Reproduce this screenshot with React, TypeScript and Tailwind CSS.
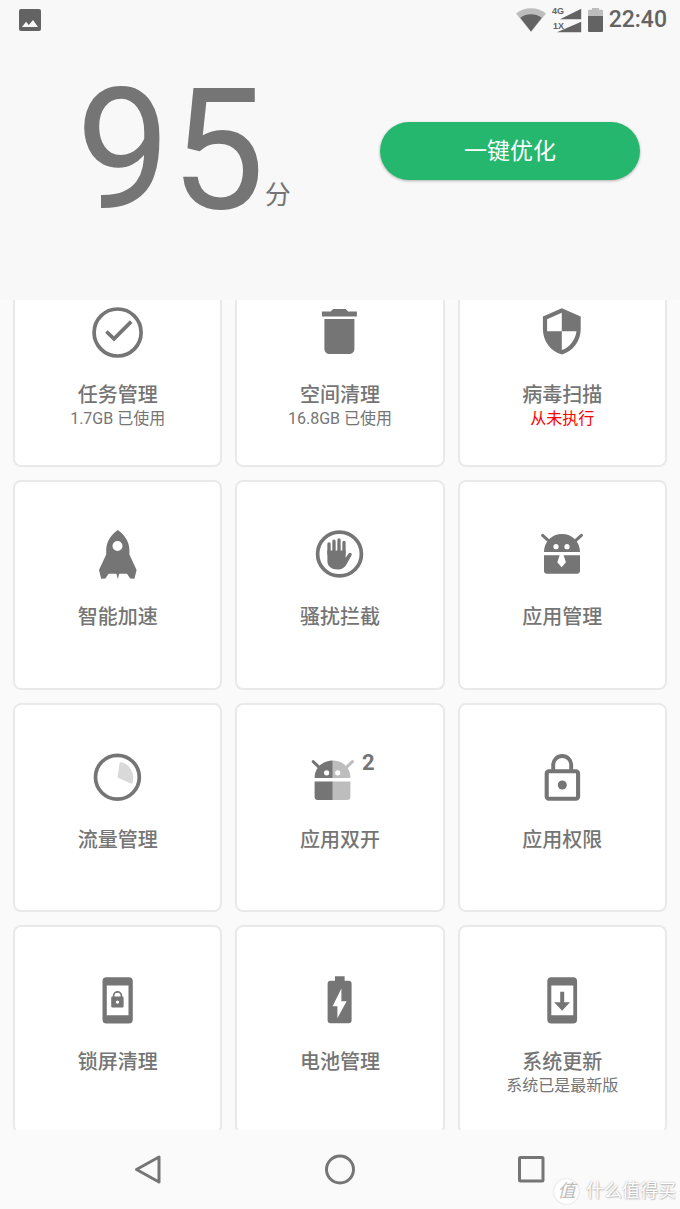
import type { ReactNode } from "react";

type Tile = {
  title: string;
  note?: string;
  alert?: boolean;
  icon: ReactNode;
  badge?: string;
};

function Icon({ children }: { children: ReactNode }) {
  return (
    <svg
      viewBox="0 0 52 52"
      className="size-[52px] overflow-visible"
      fill="currentColor"
      aria-hidden="true"
    >
      {children}
    </svg>
  );
}

const tiles: Tile[] = [
  {
    title: "任务管理",
    note: "1.7GB 已使用",
    icon: (
      <Icon>
        <circle cx="25.6" cy="26.5" r="23.5" fill="none" stroke="currentColor" strokeWidth="3.7" />
        <path d="M14.4 25.5l7.6 7.4L39.2 15.6" fill="none" stroke="currentColor" strokeWidth="3.7" />
      </Icon>
    ),
  },
  {
    title: "空间清理",
    note: "16.8GB 已使用",
    icon: (
      <Icon>
        <path
          transform="translate(-4.6 -4.6) scale(2.5)"
          d="M6 19c0 1.1.9 2 2 2h8c1.1 0 2-.9 2-2V7H6v12zM19 4h-3.5l-1-1h-5l-1 1H5v2h14V4z"
        />
      </Icon>
    ),
  },
  {
    title: "病毒扫描",
    note: "从未执行",
    alert: true,
    icon: (
      <Icon>
        <path
          transform="translate(.6 .1) scale(2.1)"
          d="M12 1L3 5v6c0 5.55 3.84 10.74 9 12 5.16-1.26 9-6.45 9-12V5l-9-4zm0 10.99h7c-.53 4.12-3.28 7.79-7 8.94V12H5V6.3l7-3.11v8.8z"
        />
      </Icon>
    ),
  },
  {
    title: "智能加速",
    icon: (
      <Icon>
        <path
          fillRule="evenodd"
          d="M25.800 2C19.500 6.500 14.200 13.500 14.200 22v4.500L7 42l2.200 8.800 4.200-.4 3.200-4.700h7.800L25.800 51l1.400-5.300H35l3.200 4.700 4.200.4L44.600 42l-7.200-15.500V22C37.400 13.500 32.100 6.500 25.800 2zM25.500 13a5 5 0 1 1 0 10 5 5 0 0 1 0-10z"
        />
      </Icon>
    ),
  },
  {
    title: "骚扰拦截",
    icon: (
      <Icon>
        <circle cx="25.5" cy="26" r="21.900" fill="none" stroke="currentColor" strokeWidth="3.7" />
        <path
          d="M15 15.8V26M20 13.2V26M25 12V26M30 14.3V26"
          fill="none"
          stroke="currentColor"
          strokeWidth="3.3"
          strokeLinecap="round"
        />
        <path d="M13.4 22.500h18.200v7.200l3-4.300c1.600-1.600 3.800-.2 3 1.900l-4.600 8.200c-2 4-5 6-9.200 6-6.200 0-10.400-3-10.400-8.500z" />
      </Icon>
    ),
  },
  {
    title: "应用管理",
    icon: (
      <Icon>
        <path
          d="M6.6 7.300l5.800 5.400M45.400 7.300l-5.800 5.400"
          fill="none"
          stroke="currentColor"
          strokeWidth="3"
          strokeLinecap="round"
        />
        <path
          fillRule="evenodd"
          d="M8 24C8 13.5 15.800 6 26 6s18 7.500 18 18zM20 16.100a2.600 2.600 0 1 0 0 5.200 2.600 2.600 0 0 0 0-5.200zM31 16.100a2.600 2.600 0 1 0 0 5.200 2.600 2.600 0 0 0 0-5.200z"
        />
        <path d="M8 27.300h15.600l-2.300 7 4.400 5 4.200-5-2.300-7H44v15.400a3 3 0 0 1-3 3H11a3 3 0 0 1-3-3z" />
      </Icon>
    ),
  },
  {
    title: "流量管理",
    icon: (
      <Icon>
        <circle cx="25.4" cy="26.2" r="21.900" fill="none" stroke="currentColor" strokeWidth="3.7" />
        <path className="fill-[#d9d9d9]" d="M25.500 26.500l2.300-15.600A16 16 0 0 1 40 33.100z" />
      </Icon>
    ),
  },
  {
    title: "应用双开",
    badge: "2",
    icon: (
      <Icon>
        <path d="M-.8 10.600l5.500 5.200" fill="none" stroke="currentColor" strokeWidth="3" strokeLinecap="round" />
        <path
          fillRule="evenodd"
          d="M.6 27C.6 16.800 8.500 9.500 18.800 9.500V27zM12.600 19.200a2.600 2.600 0 1 0 0 5.200 2.600 2.600 0 0 0 0-5.200z"
        />
        <path d="M.6 30.500h18.200V49H3.600a3 3 0 0 1-3-3z" />
        <g className="text-[#bdbdbd]">
          <path d="M38.400 10.600l-5.500 5.200" fill="none" stroke="currentColor" strokeWidth="3" strokeLinecap="round" />
          <path
            fill="currentColor"
            fillRule="evenodd"
            d="M36.400 27C36.400 16.800 29 9.500 18.800 9.500V27zM23.700 19.200a2.600 2.600 0 1 0 0 5.200 2.600 2.600 0 0 0 0-5.200z"
          />
          <path fill="currentColor" d="M18.800 30.500h17.600V46a3 3 0 0 1-3 3H18.800z" />
        </g>
      </Icon>
    ),
  },
  {
    title: "应用权限",
    icon: (
      <Icon>
        <rect x="10.700" y="20.200" width="31.400" height="27.500" rx="2.200" fill="none" stroke="currentColor" strokeWidth="4.100" />
        <path d="M17.200 20v-6a9 9 0 0 1 18 0v6" fill="none" stroke="currentColor" strokeWidth="3.900" />
        <circle cx="26.300" cy="34" r="4.500" />
      </Icon>
    ),
  },
  {
    title: "锁屏清理",
    icon: (
      <Icon>
        <path
          fillRule="evenodd"
          d="M14.500 4.200h22.300a4 4 0 0 1 4 4v38.300a4 4 0 0 1-4 4H14.500a4 4 0 0 1-4-4V8.200a4 4 0 0 1 4-4zM14.800 12.500v29.700h21.700V12.500z"
        />
        <path
          fillRule="evenodd"
          d="M20.400 23.500h10a1.200 1.200 0 0 1 1.200 1.200v8.600a1.200 1.200 0 0 1-1.200 1.200h-10a1.200 1.200 0 0 1-1.200-1.200v-8.600a1.200 1.200 0 0 1 1.200-1.200zM25.500 27.400a1.700 1.700 0 1 0 0 3.400 1.700 1.700 0 0 0 0-3.400z"
        />
        <path d="M21.600 24v-1.200a3.900 3.900 0 0 1 7.800 0V24" fill="none" stroke="currentColor" strokeWidth="1.700" />
      </Icon>
    ),
  },
  {
    title: "电池管理",
    icon: (
      <Icon>
        <path
          fillRule="evenodd"
          d="M21 3.200h9.600v4.600h4a3 3 0 0 1 3 3v36.400a3 3 0 0 1-3 3h-18a3 3 0 0 1-3-3V10.800a3 3 0 0 1 3-3H21zM27.400 15.500l-8.800 17.700h4.800v12l9.200-17h-5.200z"
        />
      </Icon>
    ),
  },
  {
    title: "系统更新",
    note: "系统已是最新版",
    icon: (
      <Icon>
        <path
          fillRule="evenodd"
          d="M15.300 4.200h21.800a4 4 0 0 1 4 4v38.300a4 4 0 0 1-4 4H15.300a4 4 0 0 1-4-4V8.200a4 4 0 0 1 4-4zM15.300 12.500v29.700h22V12.500z"
        />
        <path d="M24.200 18.800h4v10.400H34l-7.900 8.600-7.900-8.600h6z" />
      </Icon>
    ),
  },
];

function StatusBar() {
  return (
    <div className="flex h-10 items-center justify-between pl-[19px] pr-[13px] text-[#636363]">
      <svg viewBox="0 0 22 22" className="size-[22px]" fill="currentColor" aria-hidden="true">
        <path
          fillRule="evenodd"
          d="M2 0h18a2 2 0 0 1 2 2v18a2 2 0 0 1-2 2H2a2 2 0 0 1-2-2V2a2 2 0 0 1 2-2zM3 18h16l-5-7-4.200 5L7 12.700z"
        />
      </svg>
      <div className="flex items-center gap-[6px]">
        <svg viewBox="0 0 30 24" className="h-6 w-[30px]" aria-hidden="true">
          <path className="fill-[#bdbdbd]" d="M0 5.500C8.500-1.500 21.500-1.500 30 5.500L15 24z" />
          <path fill="currentColor" d="M4.300 9.800C10.500 5.200 19.500 5.200 25.700 9.800L15 23.500z" />
        </svg>
        <svg viewBox="0 0 30 26" className="h-[26px] w-[30px]" fill="currentColor" aria-hidden="true">
          <path d="M8 12.300L29.200 1.700v10.600zM5 25.300L29.200 14.700v10.600z" />
          <text x="0" y="7" className="font-['Liberation_Sans'] text-[9px] font-bold">4G</text>
          <text x="1" y="21.500" className="font-['Liberation_Sans'] text-[9px] font-bold">1X</text>
        </svg>
        <svg viewBox="0 0 15 24" className="h-6 w-[15px]" aria-hidden="true">
          <path className="fill-[#bdbdbd]" d="M4 0h7v1.800h3a1 1 0 0 1 1 1V9H0V2.800a1 1 0 0 1 1-1h3z" />
          <path fill="currentColor" d="M0 8h15v15a1 1 0 0 1-1 1H1a1 1 0 0 1-1-1z" />
        </svg>
        <time className="text-[23px] leading-6 font-medium">22:40</time>
      </div>
    </div>
  );
}

function FeatureTile({ tile }: { tile: Tile }) {
  return (
    <button
      type="button"
      className="flex aspect-square flex-col items-center justify-start rounded-lg border-2 border-[#e9e9e9] bg-white pt-[46px]"
    >
      <span className="relative">
        {tile.icon}
        {tile.badge && (
          <span className="absolute top-0 left-full -ml-1 text-[22px] leading-6 font-bold">{tile.badge}</span>
        )}
      </span>
      <span className="mt-[23px] text-xl leading-7 font-medium">{tile.title}</span>
      {tile.note && (
        <span className={tile.alert ? "text-base leading-5 text-[#ff0000]" : "text-base leading-5"}>
          {tile.note}
        </span>
      )}
    </button>
  );
}

export default function App() {
  return (
    <div className="relative flex h-screen flex-col overflow-hidden bg-[#fafafa] font-[Roboto,'Noto_Sans_CJK_SC',sans-serif] text-[#757575]">
      <header className="shrink-0 bg-[#f8f8f8]">
        <StatusBar />
        <div className="flex items-center justify-between pt-[27px] pr-10 pb-[65px] pl-[76px]">
          <p className="flex items-baseline">
            <span className="text-[168px] leading-none">95</span>
            <span className="relative bottom-1 text-[26px] leading-none">分</span>
          </p>
          <button
            type="button"
            className="h-[58px] w-[260px] rounded-full bg-[#25b76e] pt-[3px] text-[23px] text-white shadow-[0_1px_3px_rgba(0,0,0,0.3)]"
          >
            一键优化
          </button>
        </div>
      </header>

      <main className="min-h-0 flex-1 overflow-hidden">
        <div className="-mt-[42px] grid grid-cols-3 gap-[13px] px-[13px]">
          {tiles.map((tile) => (
            <FeatureTile key={tile.title} tile={tile} />
          ))}
        </div>
      </main>

      <nav className="grid h-[79px] shrink-0 grid-cols-3 place-items-center px-[52px]">
        <button type="button" aria-label="返回">
          <svg viewBox="0 0 32 32" className="size-8" fill="none" stroke="currentColor" strokeWidth="3" strokeLinejoin="round" aria-hidden="true">
            <path d="M4.500 15.500L27 3v25z" />
          </svg>
        </button>
        <button type="button" aria-label="主屏幕">
          <svg viewBox="0 0 32 32" className="size-8" fill="none" stroke="currentColor" strokeWidth="3" aria-hidden="true">
            <circle cx="16" cy="15.500" r="13.500" />
          </svg>
        </button>
        <button type="button" aria-label="最近任务">
          <svg viewBox="0 0 32 32" className="size-8" fill="none" stroke="currentColor" strokeWidth="3" aria-hidden="true">
            <rect x="3.500" y="3.500" width="23.500" height="23.500" rx="1" />
          </svg>
        </button>
      </nav>

      <div className="absolute right-1 bottom-1 flex items-center gap-[7px] text-white">
        <span className="flex size-[25px] items-center justify-center rounded-full bg-white text-lg leading-none text-[#bdbdbd] italic shadow-[0_0_2px_rgba(0,0,0,0.2)]">
          值
        </span>
        <span className="text-lg leading-7 [text-shadow:0_0_2px_rgba(0,0,0,0.35),1px_1px_1px_rgba(0,0,0,0.15)]">
          什么值得买
        </span>
      </div>
    </div>
  );
}
